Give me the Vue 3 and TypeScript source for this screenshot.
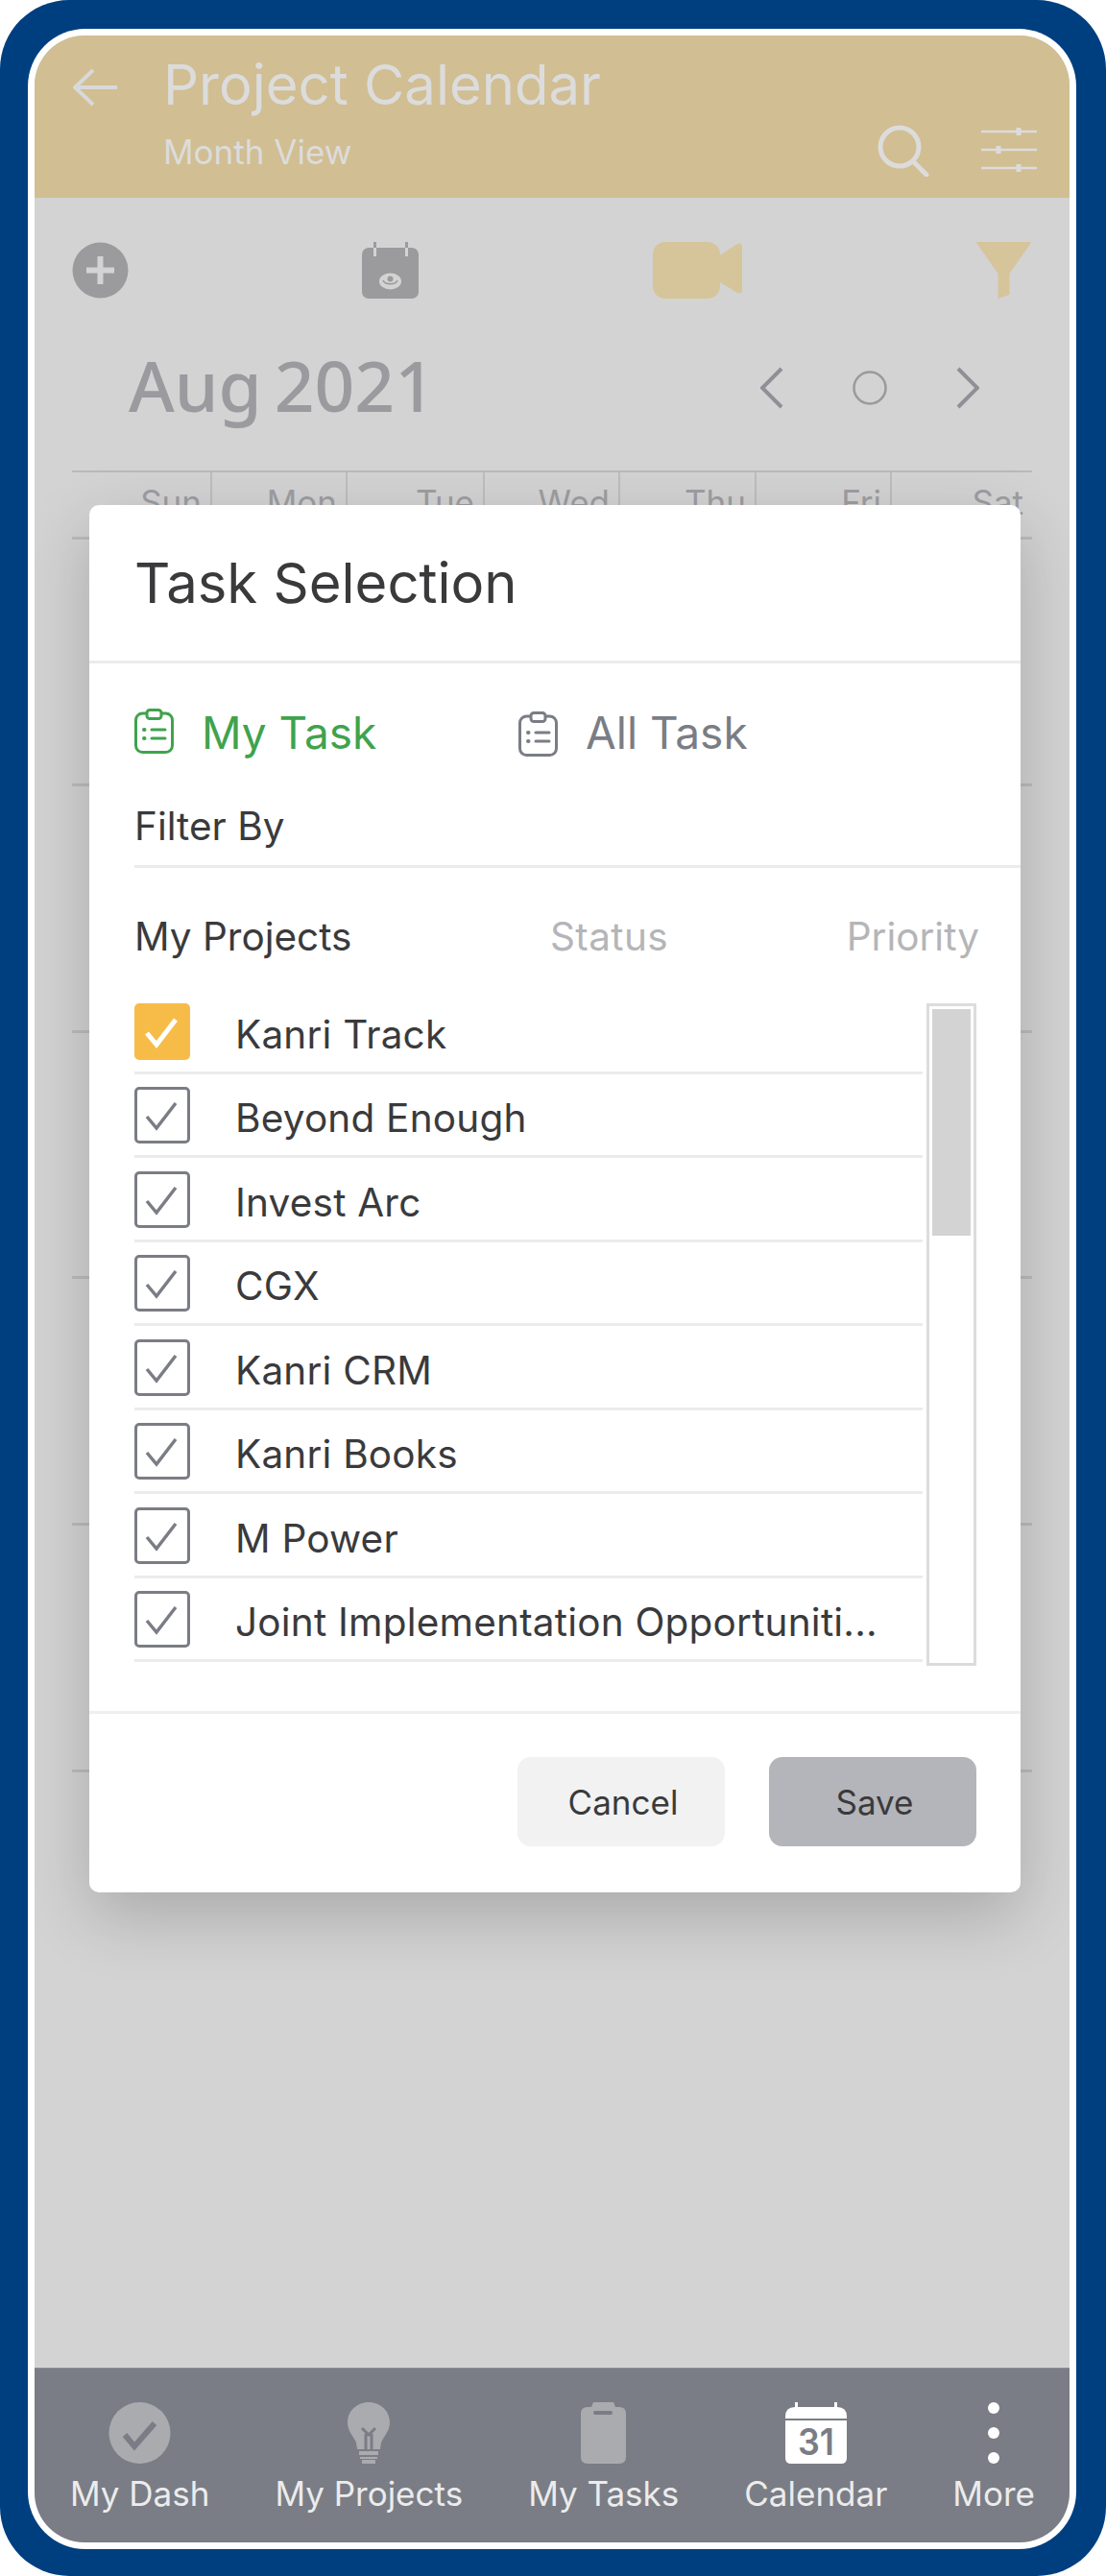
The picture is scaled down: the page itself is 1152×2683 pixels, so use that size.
<script setup lang="ts">
const days = ['Sun', 'Mon', 'Tue', 'Wed', 'Thu', 'Fri', 'Sat'];
const weeks = [1, 2, 3, 4, 5, 6];
const projects = [
  { name: 'Kanri Track', selected: true },
  { name: 'Beyond Enough', selected: false },
  { name: 'Invest Arc', selected: false },
  { name: 'CGX', selected: false },
  { name: 'Kanri CRM', selected: false },
  { name: 'Kanri Books', selected: false },
  { name: 'M Power', selected: false },
  { name: 'Joint Implementation Opportuniti...', selected: false },
];
</script>

<template>
  <div class="page">
    <div class="frame">
      <div class="screen">
        <header class="topbar">
          <svg class="back" viewBox="0 0 46 40" aria-hidden="true">
            <path d="M21 2 2 20l19 18M2 20h44" />
          </svg>
          <div class="titles">
            <div class="title">Project Calendar</div>
            <div class="subtitle">Month View</div>
          </div>
          <div class="top-actions">
            <svg class="search" viewBox="0 0 54 54" aria-hidden="true">
              <circle cx="23" cy="23" r="20" />
              <path d="m37 38 14 14" />
            </svg>
            <svg class="tune" viewBox="0 0 58 46" aria-hidden="true">
              <path d="M0 4h58M0 23h58M0 42h58" />
              <path class="knob" d="M39 0v8M18 19v8M39 38v8" />
            </svg>
          </div>
        </header>

        <div class="toolbar">
          <svg class="tool" viewBox="0 0 58 59" aria-hidden="true">
            <circle cx="29" cy="29.500" r="29" fill="#9b9b9d" />
            <path d="M26 15h6v11.500h11.500v6H32V44h-6V32.500H14.500v-6H26z" fill="#d3d3d3" />
          </svg>
          <svg class="tool" viewBox="0 0 59 59" aria-hidden="true">
            <rect y="6" width="59" height="53" rx="7" fill="#9b9b9d" />
            <path d="M12 0h3v15h-3zM45 0h3v15h-3z" fill="#9b9b9d" />
            <path d="M12 6h3v9h-3zM45 6h3v9h-3z" fill="#d3d3d3" />
            <ellipse cx="29.500" cy="41" rx="11.500" ry="8.500" fill="#d3d3d3" />
            <path d="M22 40c2 5 13 5 15 0" fill="none" stroke="#9b9b9d" stroke-width="1.600" />
            <circle cx="29.500" cy="38.500" r="3" fill="#9b9b9d" />
          </svg>
          <svg class="tool video" viewBox="0 0 93 59" aria-hidden="true">
            <rect width="70" height="59" rx="13" fill="#d6c59b" />
            <path d="M68 15 88 2q5-2 5 3v44q0 6-5 4L68 41z" fill="#d6c59b" />
          </svg>
          <svg class="tool" viewBox="0 0 58 59" aria-hidden="true">
            <path d="M0 0h58L35 33v22l-12 4V33z" fill="#d6c59b" />
          </svg>
        </div>

        <div class="month-row">
          <div class="month"><span>Aug</span><span>2021</span></div>
          <div class="month-nav">
            <svg class="chev" viewBox="0 0 24 44" aria-hidden="true"><path d="M22 2 2 22l20 20" /></svg>
            <svg class="today" viewBox="0 0 36 36" aria-hidden="true"><circle cx="18" cy="18" r="16.500" /></svg>
            <svg class="chev" viewBox="0 0 24 44" aria-hidden="true"><path d="m2 2 20 20L2 42" /></svg>
          </div>
        </div>

        <div class="calendar">
          <div class="days">
            <div v-for="day in days" :key="day" class="day">{{ day }}</div>
          </div>
          <div v-for="week in weeks" :key="week" class="week"></div>
        </div>

        <nav class="tabbar">
          <div class="tab">
            <svg class="tab-icon" width="65" height="64" viewBox="0 0 65 64" aria-hidden="true">
              <circle cx="32.500" cy="32" r="32" fill="#a9abaf" />
              <path d="m17 34 10 12 21-24" fill="none" stroke="#7a7d85" stroke-width="6" />
            </svg>
            <span>My Dash</span>
          </div>
          <div class="tab">
            <svg class="tab-icon" width="44" height="64" viewBox="0 0 44 64" aria-hidden="true">
              <path d="M22 0c12 0 22 9 22 21 0 9-6 14-9 21l-1 7H10l-1-7C6 35 0 30 0 21 0 9 10 0 22 0z" fill="#a9abaf" />
              <path d="M15 27l7 7 7-7M19 33v16M25 33v16" fill="none" stroke="#7a7d85" stroke-width="3" />
              <path d="M12 51h20v4H12zM13 57h18v2H13zM15 60h14v4H15z" fill="#a9abaf" />
            </svg>
            <span>My Projects</span>
          </div>
          <div class="tab">
            <svg class="tab-icon" width="47" height="64" viewBox="0 0 47 64" aria-hidden="true">
              <path d="M13 0h21l2 5h4q7 0 7 7v45q0 7-7 7H7q-7 0-7-7V12q0-7 7-7h4z" fill="#a9abaf" />
              <rect x="13" y="9" width="20" height="4" rx="2" fill="#7a7d85" />
            </svg>
            <span>My Tasks</span>
          </div>
          <div class="tab">
            <svg class="tab-icon" width="64" height="64" viewBox="0 0 64 64" aria-hidden="true">
              <path d="M10 0h3v5h38V0h3v5q10 0 10 10v2H0v-2Q0 5 10 5z" fill="#fff" />
              <path d="M0 19h64v39q0 6-6 6H6q-6 0-6-6z" fill="#fff" />
              <text x="32" y="55" class="cal-day" text-anchor="middle" textLength="38" lengthAdjust="spacingAndGlyphs">31</text>
            </svg>
            <span>Calendar</span>
          </div>
          <div class="tab">
            <svg class="tab-icon" width="12" height="64" viewBox="0 0 12 64" aria-hidden="true">
              <circle cx="6" cy="6" r="6" fill="#fff" />
              <circle cx="6" cy="32" r="6" fill="#fff" />
              <circle cx="6" cy="58" r="6" fill="#fff" />
            </svg>
            <span>More</span>
          </div>
        </nav>

        <section class="modal">
          <div class="modal-head">Task Selection</div>

          <div class="task-tabs">
            <div class="task-tab active">
              <svg width="41" height="47" viewBox="0 0 41 47" aria-hidden="true">
                <rect x="1.500" y="5" width="38" height="40.500" rx="7" />
                <rect x="13" y="1.500" width="15" height="9" rx="3" fill="#fff" />
                <path d="M18 22h14M18 31h14" />
                <path class="dot" d="M10 22h.5M10 31h.5" />
              </svg>
              <span>My Task</span>
            </div>
            <div class="task-tab">
              <svg width="41" height="47" viewBox="0 0 41 47" aria-hidden="true">
                <rect x="1.500" y="5" width="38" height="40.500" rx="7" />
                <rect x="13" y="1.500" width="15" height="9" rx="3" fill="#fff" />
                <path d="M18 22h14M18 31h14" />
                <path class="dot" d="M10 22h.5M10 31h.5" />
              </svg>
              <span>All Task</span>
            </div>
          </div>

          <div class="filter-by">Filter By</div>

          <div class="filter-cols">
            <span class="col-on">My Projects</span>
            <span class="col-status">Status</span>
            <span>Priority</span>
          </div>

          <div class="picker">
            <ul class="project-list">
              <li v-for="project in projects" :key="project.name" class="project">
                <span class="check" :class="{ on: project.selected }">
                  <svg viewBox="0 0 52 53" aria-hidden="true"><path d="m10 28 10 12 20-26" /></svg>
                </span>
                <span class="project-name">{{ project.name }}</span>
              </li>
            </ul>
            <div class="scroll-track"><div class="scroll-thumb"></div></div>
          </div>

          <div class="modal-foot">
            <button class="btn cancel" type="button">Cancel</button>
            <button class="btn save" type="button">Save</button>
          </div>
        </section>
      </div>
    </div>
  </div>
</template>

<style>
html,
body {
  margin: 0;
  background: #fff;
}
</style>

<style scoped>
.page {
  box-sizing: border-box;
  width: 1152px;
  height: 2683px;
  padding: 30px 31px 28px 29px;
  border-radius: 72px;
  background: #003f7f;
  font-family: Inter, "Liberation Sans", sans-serif;
}

.frame {
  height: 100%;
  box-sizing: border-box;
  padding: 7px;
  border-radius: 60px;
  background: #fff;
}

.screen {
  position: relative;
  display: flex;
  flex-direction: column;
  height: 100%;
  overflow: hidden;
  border-radius: 52px;
  background: #d3d3d3;
}

.topbar {
  display: flex;
  flex: none;
  height: 169px;
  box-sizing: border-box;
  padding: 34px 34px 0 40px;
  background: #d1be92;
}

.back {
  width: 46px;
  height: 40px;
  flex: none;
}

.back path {
  fill: none;
  stroke: #d9d9d9;
  stroke-width: 4;
}

.titles {
  margin-left: 48px;
  margin-top: -17px;
  color: #dcdcdc;
}

.title {
  font-size: 58px;
  line-height: 68px;
}

.subtitle {
  margin-top: 16px;
  font-size: 35px;
  line-height: 40px;
}

.top-actions {
  display: flex;
  align-items: flex-start;
  gap: 54px;
  margin-left: auto;
  padding-top: 59px;
}

.search {
  width: 54px;
  height: 54px;
}

.search circle,
.search path {
  fill: none;
  stroke: #dcdcdc;
  stroke-width: 5;
  stroke-linecap: round;
}

.tune {
  width: 58px;
  height: 46px;
  margin-top: 3px;
}

.tune path {
  fill: none;
  stroke: #dcdcdc;
  stroke-width: 2.500;
}

.tune .knob {
  stroke-width: 5;
}

.toolbar {
  display: flex;
  flex: none;
  justify-content: space-between;
  margin-top: 46px;
  padding: 0 39px;
}

.tool {
  width: 59px;
  height: 59px;
}

.tool.video {
  width: 93px;
}

.month-row {
  display: flex;
  flex: none;
  align-items: center;
  justify-content: space-between;
  height: 90px;
  margin-top: 48px;
  padding: 0 94px 0 98px;
}

.month {
  display: flex;
  gap: 13px;
  margin-bottom: 6px;
  color: #9a9a9f;
  font-family: "Noto Sans", Lato, sans-serif;
  font-size: 73px;
  font-weight: 500;
  line-height: 90px;
}

.month-nav {
  display: flex;
  align-items: center;
  gap: 72px;
}

.chev {
  width: 24px;
  height: 44px;
}

.chev path {
  fill: none;
  stroke: #8f9095;
  stroke-width: 4;
}

.today {
  width: 36px;
  height: 36px;
}

.today circle {
  fill: none;
  stroke: #9a9a9e;
  stroke-width: 2.500;
}

.calendar {
  flex: none;
  margin: 41px 39px 0;
}

.days {
  display: grid;
  grid-template-columns: 146px 141px 143px 141px 142px 141px 146px;
  height: 67px;
  border-top: 2px solid #b9b9bd;
}

.day {
  box-sizing: border-box;
  padding: 11px 9px 0 0;
  border-right: 2px solid #bdbdc1;
  color: #9e9ea2;
  font-size: 35px;
  line-height: 41px;
  text-align: right;
}

.day:last-child {
  border-right: 0;
}

.week {
  box-sizing: border-box;
  height: 256.800px;
  border-top: 3px solid #bcbcc0;
}

.tabbar {
  display: flex;
  justify-content: space-between;
  height: 182px;
  box-sizing: border-box;
  margin-top: auto;
  padding: 35px 36px 0 37px;
  border-top: 1px solid #8c8e94;
  background: #7a7d85;
}

.tab {
  display: flex;
  flex-direction: column;
  align-items: center;
  color: #ececec;
  font-size: 35px;
  line-height: 41px;
}

.tab-icon {
  display: block;
  margin-bottom: 11px;
}

.cal-day {
  fill: #7a7d85;
  font-family: Inter, "Liberation Sans", sans-serif;
  font-size: 38px;
  font-weight: 600;
}

.modal {
  position: absolute;
  top: 489px;
  left: 57px;
  width: 970px;
  border-radius: 10px;
  background: #fff;
  box-shadow: 0 24px 70px rgba(0, 0, 0, 0.2);
  color: #3a3a3c;
}

.modal-head {
  height: 165px;
  box-sizing: border-box;
  padding: 47px 0 0 47px;
  border-bottom: 3px solid #ebebeb;
  font-size: 58px;
  line-height: 68px;
}

.task-tabs {
  display: flex;
  padding: 47px 0 0 47px;
}

.task-tab {
  display: flex;
  align-items: center;
  gap: 29px;
  width: 400px;
  color: #7a7d85;
  font-size: 46px;
  line-height: 47px;
}

.task-tab svg {
  flex: none;
  margin-top: 3px;
}

.task-tab.active {
  color: #3fa34d;
}

.task-tab.active svg {
  margin-top: -3px;
}

.task-tab rect,
.task-tab path {
  fill: none;
  stroke: currentColor;
  stroke-width: 3;
  stroke-linecap: round;
}

.task-tab rect[fill] {
  fill: #fff;
}

.task-tab .dot {
  stroke-width: 4;
}

.filter-by {
  height: 67px;
  box-sizing: border-box;
  margin: 49px 0 0 47px;
  border-bottom: 3px solid #ebebeb;
  font-size: 40.500px;
  line-height: 48px;
}

.filter-cols {
  display: flex;
  justify-content: space-between;
  padding: 48px 43px 0 47px;
  color: #b5b5b8;
  font-size: 40.500px;
  line-height: 48px;
}

.col-on {
  color: #3a3a3c;
}

.col-status {
  margin-left: 21px;
  letter-spacing: 0.4px;
}

.picker {
  display: flex;
  gap: 4px;
  align-items: flex-start;
  padding: 31px 46px 0 47px;
}

.project-list {
  flex: 1;
  min-width: 0;
  margin: 0;
  padding: 0;
  list-style: none;
}

.project {
  display: flex;
  align-items: center;
  gap: 47px;
  box-sizing: border-box;
  height: 87.500px;
  padding: 13.500px 0 12px;
  border-bottom: 3px solid #ebebeb;
  font-size: 40.500px;
  letter-spacing: 0.2px;
}

.project-name {
  padding-top: 6px;
  white-space: nowrap;
}

.check {
  display: block;
  flex: none;
  box-sizing: border-box;
  width: 58px;
  height: 59px;
  border: 3.500px solid #7b7d85;
  border-radius: 5px;
}

.check svg {
  display: block;
  width: 100%;
  height: 100%;
}

.check path {
  fill: none;
  stroke: #7b7d85;
  stroke-width: 3.500;
}

.check.on {
  border-color: #f6bc47;
  background: #f6bc47;
}

.check.on path {
  stroke: #fff;
  stroke-width: 5;
}

.scroll-track {
  flex: none;
  width: 52px;
  height: 690px;
  box-sizing: border-box;
  margin-top: 14px;
  padding: 3px 3px 0;
  border: 3px solid #dcdcdc;
}

.scroll-thumb {
  height: 236px;
  background: #d3d3d3;
}

.modal-foot {
  display: flex;
  justify-content: flex-end;
  gap: 46px;
  margin-top: 47px;
  padding: 45px 46px 48px 0;
  border-top: 3px solid #efefef;
}

.btn {
  width: 216px;
  height: 93px;
  padding: 0 0 0 4px;
  border: 0;
  border-radius: 14px;
  color: #3a3a3c;
  font-family: inherit;
  font-size: 35px;
}

.cancel {
  background: #f2f2f2;
}

.save {
  background: #b4b5ba;
}
</style>
